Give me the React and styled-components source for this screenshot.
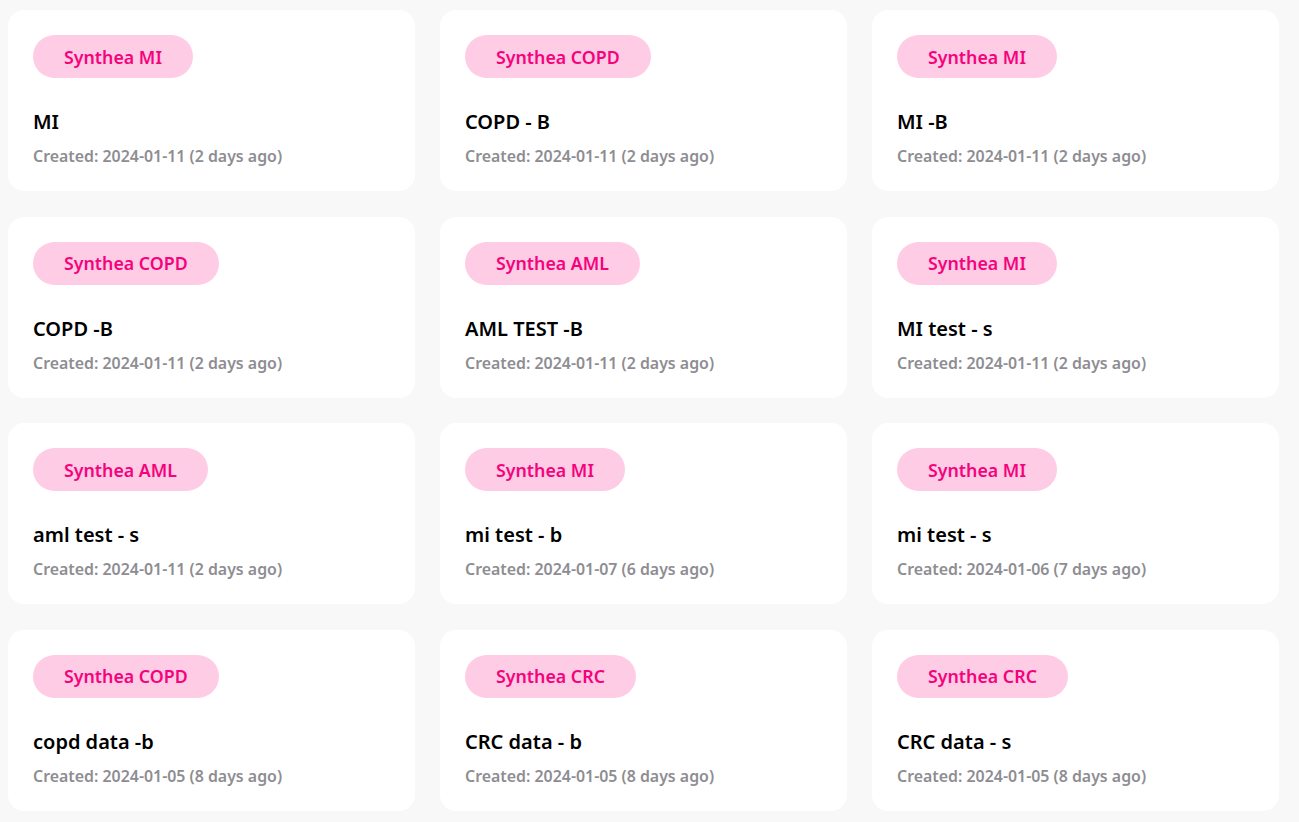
import styled, {createGlobalStyle} from 'styled-components'

const GlobalStyle = createGlobalStyle`
  body {
    margin: 0;
    background-color: #f8f8f8;
    font-family: 'Noto Sans', 'Open Sans', sans-serif;
  }
`

const datasets = [
  {id: 1, tag: 'Synthea MI', name: 'MI', created: '2024-01-11 (2 days ago)'},
  {id: 2, tag: 'Synthea COPD', name: 'COPD - B', created: '2024-01-11 (2 days ago)'},
  {id: 3, tag: 'Synthea MI', name: 'MI -B', created: '2024-01-11 (2 days ago)'},
  {id: 4, tag: 'Synthea COPD', name: 'COPD -B', created: '2024-01-11 (2 days ago)'},
  {id: 5, tag: 'Synthea AML', name: 'AML TEST -B', created: '2024-01-11 (2 days ago)'},
  {id: 6, tag: 'Synthea MI', name: 'MI test - s', created: '2024-01-11 (2 days ago)'},
  {id: 7, tag: 'Synthea AML', name: 'aml test - s', created: '2024-01-11 (2 days ago)'},
  {id: 8, tag: 'Synthea MI', name: 'mi test - b', created: '2024-01-07 (6 days ago)'},
  {id: 9, tag: 'Synthea MI', name: 'mi test - s', created: '2024-01-06 (7 days ago)'},
  {id: 10, tag: 'Synthea COPD', name: 'copd data -b', created: '2024-01-05 (8 days ago)'},
  {id: 11, tag: 'Synthea CRC', name: 'CRC data - b', created: '2024-01-05 (8 days ago)'},
  {id: 12, tag: 'Synthea CRC', name: 'CRC data - s', created: '2024-01-05 (8 days ago)'},
]

const Page = styled.div`
  padding: 10px 20px 12px 8px;
`

const Grid = styled.div`
  display: grid;
  grid-template-columns: repeat(3, 407px);
  column-gap: 25px;
  row-gap: 25.5px;
`

const Card = styled.div`
  background-color: #ffffff;
  border-radius: 16px;
  padding: 25px;
  display: flex;
  flex-direction: column;
  align-items: flex-start;
`

const Tag = styled.span`
  height: 43px;
  padding: 0 31px;
  display: flex;
  align-items: center;
  border-radius: 22px;
  background-color: #ffcce6;
  color: #f5037c;
  font-size: 17.8px;
  font-weight: 600;
`

const Title = styled.h3`
  margin: 30px 0 0;
  font-size: 20px;
  line-height: 28px;
  font-weight: 600;
  color: #000000;
`

const Created = styled.p`
  margin: 10px 0 0;
  font-size: 15.9px;
  line-height: 20px;
  font-weight: 600;
  color: #8d8d92;
`

const App = () => (
  <Page>
    <GlobalStyle />
    <Grid>
      {datasets.map(item => (
        <Card key={item.id}>
          <Tag>{item.tag}</Tag>
          <Title>{item.name}</Title>
          <Created>Created: {item.created}</Created>
        </Card>
      ))}
    </Grid>
  </Page>
)

export default App
